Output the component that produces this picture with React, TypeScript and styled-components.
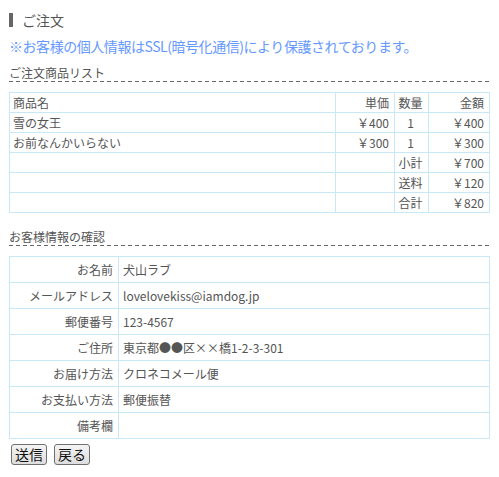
import React from "react";
import styled, { createGlobalStyle } from "styled-components";

const Global = createGlobalStyle`
  html, body { margin: 0; padding: 0; background: #fff; }
  body { font-family: "Noto Sans CJK JP", "Noto Sans", sans-serif; color: #555; }
`;

const Page = styled.div`
  width: 480px;
  padding: 11px 0 0 9px;
`;

const Heading = styled.h1`
  display: flex;
  align-items: center;
  height: 18px;
  margin: 0;
  font-size: 14px;
  font-weight: normal;
  color: #555;
  line-height: 18px;
`;

const Bar = styled.span`
  width: 4px;
  height: 14px;
  background: #666;
  margin-right: 9px;
`;

const Notice = styled.p`
  margin: 8px 0 0;
  font-size: 14px;
  line-height: 18px;
  letter-spacing: -0.45px;
  color: #6699ff;
  white-space: nowrap;
`;

const SectionTitle = styled.h2<{ $top: number }>`
  margin: ${(p) => p.$top}px 0 0;
  height: 17px;
  font-size: 12px;
  font-weight: normal;
  line-height: 15px;
  color: #555;
  background-image: repeating-linear-gradient(to right, #666 0 4px, transparent 4px 7px);
  background-size: 100% 1px;
  background-repeat: no-repeat;
  background-position: left bottom;
`;

const Table = styled.table`
  margin-top: 10px;
  width: 480px;
  border-collapse: collapse;
  table-layout: fixed;
  font-size: 12px;
  color: #555;
`;

const Cell = styled.td<{ $align?: "left" | "right" | "center" }>`
  border: 1px solid #c8e8f8;
  height: 19px;
  padding: 0 5px 0 3px;
  line-height: 19px;
  text-align: ${(p) => p.$align ?? "left"};
  white-space: nowrap;
  overflow: hidden;
`;

const InfoLabel = styled.th`
  border: 1px solid #c8e8f8;
  height: 25px;
  padding: 0 5px 0 0;
  font-weight: normal;
  text-align: right;
  line-height: 25px;
  white-space: nowrap;
`;

const InfoValue = styled.td`
  border: 1px solid #c8e8f8;
  height: 25px;
  padding: 0 0 0 4px;
  line-height: 25px;
  white-space: nowrap;
`;

const Buttons = styled.div`
  display: flex;
  gap: 7px;
  margin-top: 5px;
  padding-left: 2px;
`;

const Button = styled.button`
  height: 21px;
  padding: 0 3px;
  font-family: "Noto Sans CJK JP", sans-serif;
  font-size: 14px;
  line-height: 19px;
  color: #111;
  border: 1px solid #707070;
  border-radius: 3px;
  background: linear-gradient(#f4f4f4, #dedede);
`;

const items = [
  { name: "雪の女王", price: "￥400", qty: "1", total: "￥400" },
  { name: "お前なんかいらない", price: "￥300", qty: "1", total: "￥300" },
];

const sums = [
  { label: "小計", value: "￥700" },
  { label: "送料", value: "￥120" },
  { label: "合計", value: "￥820" },
];

const info = [
  ["お名前", "犬山ラブ"],
  ["メールアドレス", "lovelovekiss@iamdog.jp"],
  ["郵便番号", "123-4567"],
  ["ご住所", "東京都●●区××橋1-2-3-301"],
  ["お届け方法", "クロネコメール便"],
  ["お支払い方法", "郵便振替"],
  ["備考欄", ""],
];

export default function App() {
  return (
    <>
      <Global />
      <Page>
        <Heading>
          <Bar />
          ご注文
        </Heading>
        <Notice>※お客様の個人情報はSSL(暗号化通信)により保護されております。</Notice>

        <SectionTitle $top={10}>ご注文商品リスト</SectionTitle>
        <Table>
          <colgroup>
            <col style={{ width: 326 }} />
            <col style={{ width: 59 }} />
            <col style={{ width: 34 }} />
            <col style={{ width: 61 }} />
          </colgroup>
          <tbody>
            <tr>
              <Cell>商品名</Cell>
              <Cell $align="right">単価</Cell>
              <Cell $align="center">数量</Cell>
              <Cell $align="right">金額</Cell>
            </tr>
            {items.map((it) => (
              <tr key={it.name}>
                <Cell>{it.name}</Cell>
                <Cell $align="right">{it.price}</Cell>
                <Cell $align="center">{it.qty}</Cell>
                <Cell $align="right">{it.total}</Cell>
              </tr>
            ))}
            {sums.map((s) => (
              <tr key={s.label}>
                <Cell />
                <Cell />
                <Cell $align="center">{s.label}</Cell>
                <Cell $align="right">{s.value}</Cell>
              </tr>
            ))}
          </tbody>
        </Table>

        <SectionTitle $top={16}>お客様情報の確認</SectionTitle>
        <Table>
          <colgroup>
            <col style={{ width: 109 }} />
            <col style={{ width: 371 }} />
          </colgroup>
          <tbody>
            {info.map(([k, v]) => (
              <tr key={k}>
                <InfoLabel>{k}</InfoLabel>
                <InfoValue>{v}</InfoValue>
              </tr>
            ))}
          </tbody>
        </Table>

        <Buttons>
          <Button>送信</Button>
          <Button>戻る</Button>
        </Buttons>
      </Page>
    </>
  );
}
